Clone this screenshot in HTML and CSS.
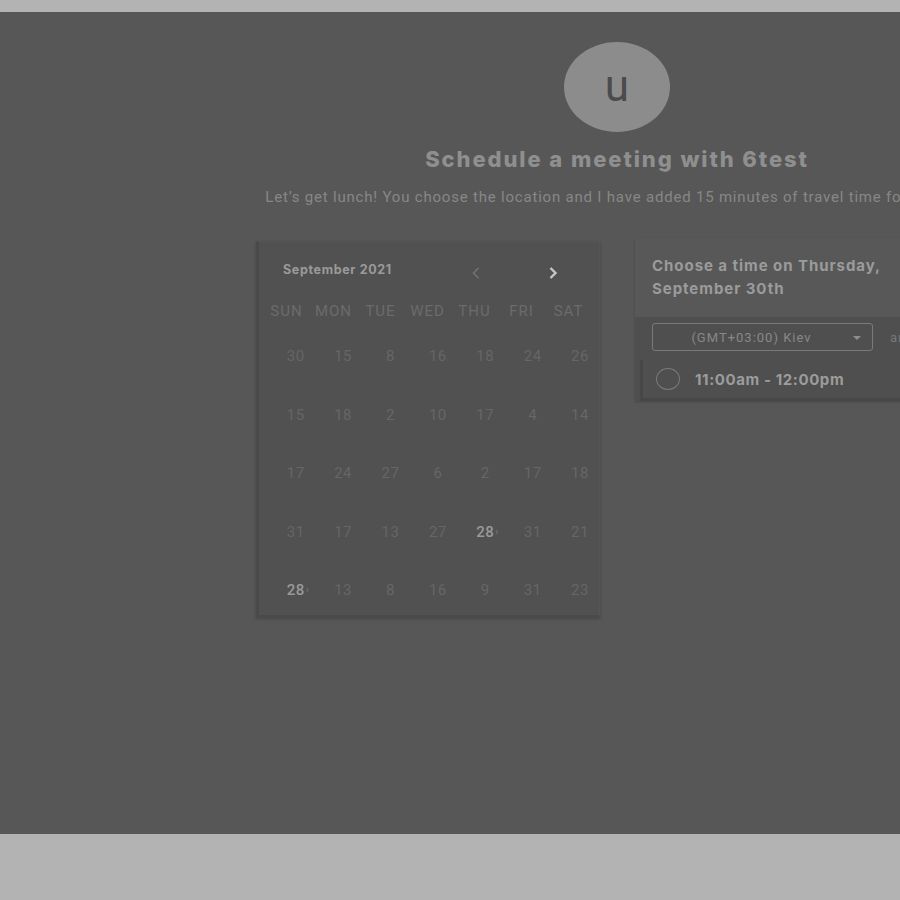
FILE: index.html
```html
<!DOCTYPE html>
<html>
<head>
<meta charset="utf-8">
<link rel="stylesheet" href="styles.css">
</head>
<body>
<div class="band"></div>
<div class="stage">
  <div class="inner">
    <div class="avatar">u</div>
    <h1 class="title">Schedule a meeting with 6test</h1>
    <p class="subtitle">Let’s get lunch! You choose the location and I have added 15 minutes of travel time for each way.</p>
    <div class="row">
      <div class="calendar">
        <div class="cal-head">
          <span class="month">September 2021</span>
          <svg class="nav prev" width="10" height="14" viewBox="0 0 10 14"><path d="M7.5 2 L2.5 7 L7.5 12" fill="none" stroke="#727272" stroke-width="1.6"/></svg>
          <svg class="nav next" width="10" height="14" viewBox="0 0 10 14"><path d="M2.5 2 L7.5 7 L2.5 12" fill="none" stroke="#c6c6c6" stroke-width="2.4"/></svg>
        </div>
        <div class="grid dow">
          <span>SUN</span><span>MON</span><span>TUE</span><span>WED</span><span>THU</span><span>FRI</span><span>SAT</span>
        </div>
        <div class="grid days">
          <span>30</span><span>15</span><span>8</span><span>16</span><span>18</span><span>24</span><span>26</span>
          <span>15</span><span>18</span><span>2</span><span>10</span><span>17</span><span>4</span><span>14</span>
          <span>17</span><span>24</span><span>27</span><span>6</span><span>2</span><span>17</span><span>18</span>
          <span>31</span><span>17</span><span>13</span><span>27</span><span class="hl">28<i>›</i></span><span>31</span><span>21</span>
          <span class="hl">28<i>›</i></span><span>13</span><span>8</span><span>16</span><span>9</span><span>31</span><span>23</span>
        </div>
      </div>
      <div class="times">
        <div class="times-head">Choose a time on Thursday, September 30th</div>
        <div class="tz-row">
          <div class="select">(GMT+03:00) Kiev<span class="caret"></span></div>
          <span class="tz-note">are shown</span>
        </div>
        <div class="slot">
          <span class="radio"></span>
          <span class="slot-text">11:00am - 12:00pm</span>
        </div>
      </div>
    </div>
  </div>
</div>
<div class="band bottom"></div>
</body>
</html>
```

FILE: styles.css
```css
html, body {
  margin: 0;
  padding: 0;
  background: #b3b3b3;
  overflow: hidden;
}
.band {
  height: 12px;
  background: #b3b3b3;
}
.band.bottom {
  height: 66px;
}
.stage {
  height: 822px;
  background: #575757;
  overflow: hidden;
  font-family: Roboto, "Liberation Sans", sans-serif;
}
.inner {
  width: 1234px;
  display: flex;
  flex-direction: column;
  align-items: center;
  padding-top: 30px;
}
.avatar {
  width: 106px;
  height: 90px;
  border-radius: 50%;
  background: #8c8c8c;
  color: #4b4b4b;
  font-size: 44px;
  display: flex;
  align-items: center;
  justify-content: center;
  line-height: 1;
  padding-bottom: 2px;
  box-sizing: border-box;
}
.title {
  margin: 12px 0 0;
  font-family: Inter, "Liberation Sans", sans-serif;
  font-weight: 800;
  font-size: 22px;
  line-height: 30px;
  color: #8f8f8f;
  letter-spacing: 1.9px;
}
.subtitle {
  margin: 13px 0 0;
  padding-left: 16px;
  font-size: 15px;
  line-height: 20px;
  color: #878787;
  white-space: nowrap;
  letter-spacing: 0.8px;
}
.row {
  display: flex;
  gap: 35px;
  margin-top: 34px;
  align-items: flex-start;
}
.calendar {
  width: 344px;
  height: 377px;
  box-sizing: border-box;
  background: #515151;
  border: 1px solid #555;
  border-left: 3px solid #4a4a4a;
  border-bottom: 3px solid #4a4a4a;
  box-shadow: 0 1px 3px rgba(0,0,0,0.2);
  padding: 16px 6px 0 4px;
  overflow: hidden;
}
.cal-head {
  display: flex;
  align-items: center;
  height: 24px;
  padding-left: 20px;
}
.month {
  font-family: Inter, "Liberation Sans", sans-serif;
  font-weight: 700;
  font-size: 12.5px;
  color: #9a9a9a;
  width: 188px;
  letter-spacing: 0.65px;
  margin-top: -2px;
}
.nav {
  display: block;
  margin-top: 6px;
}
.nav.next {
  margin-left: 67px;
}
.grid {
  display: grid;
  grid-template-columns: repeat(7, 47px);
}
.grid span {
  text-align: center;
}
.dow {
  margin-top: 19px;
  font-size: 15px;
  line-height: 20px;
  color: #6b6b6b;
  letter-spacing: 1px;
}
.days {
  margin-top: 15px;
  grid-template-columns: repeat(7, 47.4px);
  grid-auto-rows: 58.5px;
  font-size: 15px;
  color: #666;
  padding-left: 9px;
  letter-spacing: 0.5px;
}
.days span {
  line-height: 40px;
}
.days .hl {
  color: #999;
  font-weight: 500;
  position: relative;
}
.days .hl i {
  font-style: normal;
  font-size: 10px;
  color: #777;
  position: absolute;
  margin-left: 1px;
}
.times {
  width: 343px;
  background: #4f4f4f;
  box-shadow: 0 1px 2px rgba(0,0,0,0.2);
  margin-top: -3px;
}
.times-head {
  background: #585858;
  padding: 16px 40px 17px 17px;
  font-family: Inter, "Liberation Sans", sans-serif;
  font-weight: 700;
  font-size: 15px;
  line-height: 23px;
  color: #9b9b9b;
  letter-spacing: 0.95px;
}
.tz-row {
  display: flex;
  align-items: center;
  padding: 6px 0 0 17px;
  gap: 17px;
}
.select {
  width: 221px;
  height: 28px;
  box-sizing: border-box;
  border: 1px solid #7a7a7a;
  border-radius: 3px;
  display: flex;
  align-items: center;
  justify-content: center;
  position: relative;
  font-size: 13px;
  color: #888;
  padding-right: 22px;
  letter-spacing: 1px;
}
.caret {
  position: absolute;
  right: 11px;
  top: 12px;
  width: 0;
  height: 0;
  border-left: 4px solid transparent;
  border-right: 4px solid transparent;
  border-top: 4px solid #8e8e8e;
}
.tz-note {
  font-size: 13px;
  color: #777;
  letter-spacing: 1px;
}
.slot {
  display: flex;
  align-items: center;
  height: 38px;
  margin-top: 9px;
  border-left: 3px solid #474747;
  border-bottom: 3px solid #474747;
  margin-left: 5px;
  padding-left: 13px;
  gap: 15px;
}
.radio {
  width: 24px;
  height: 22px;
  border: 1.5px solid #7a7a7a;
  border-radius: 50%;
  box-sizing: border-box;
}
.slot-text {
  font-family: Inter, "Liberation Sans", sans-serif;
  font-weight: 700;
  font-size: 15px;
  color: #9c9c9c;
  letter-spacing: 0.6px;
}
```
